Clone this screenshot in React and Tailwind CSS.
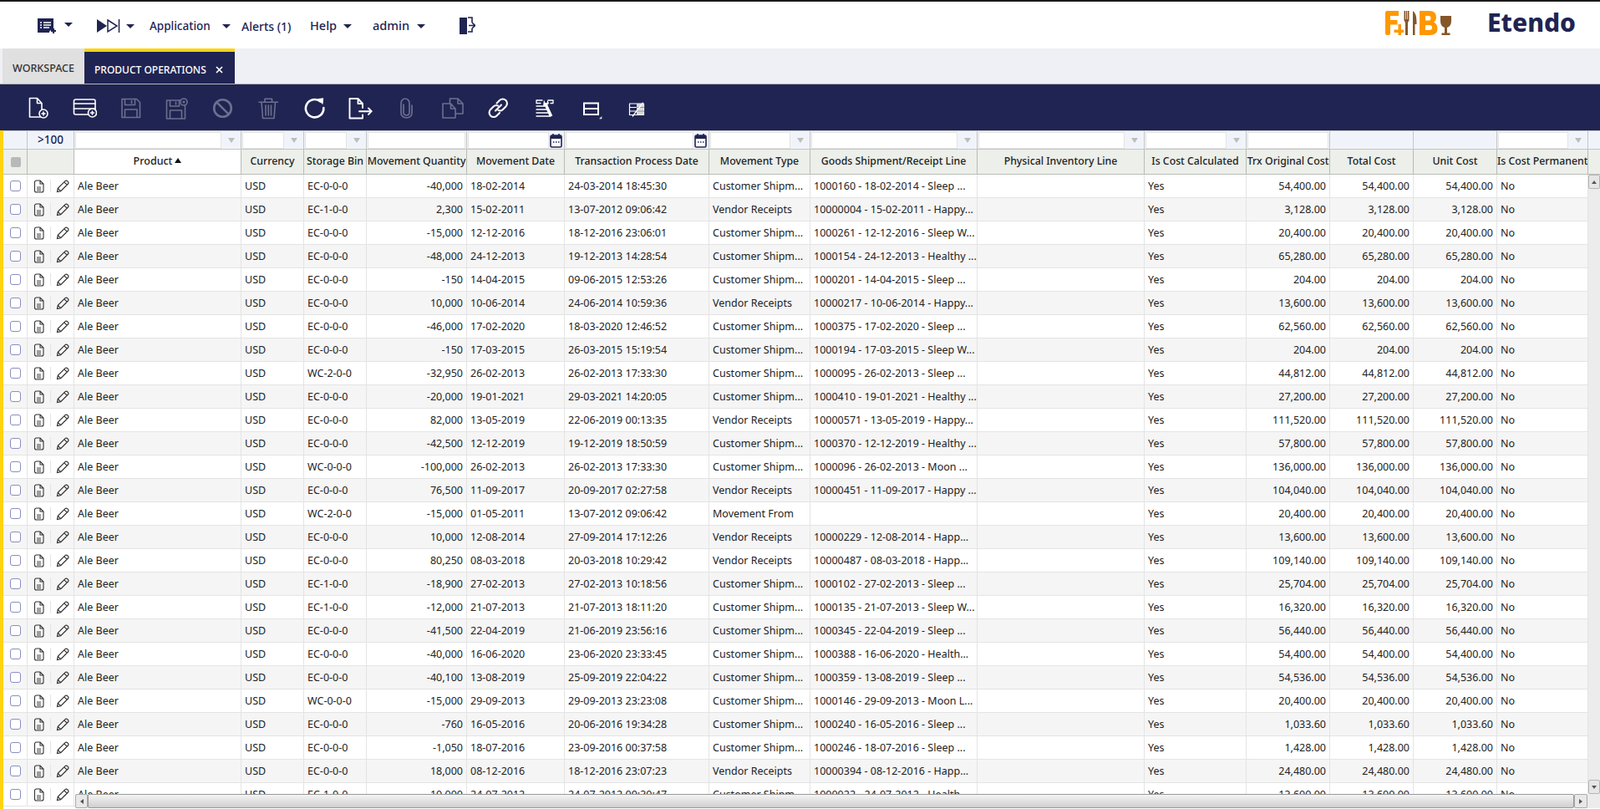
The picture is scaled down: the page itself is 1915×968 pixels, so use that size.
const CS = "Customer Shipm...";
const VR = "Vendor Receipts";

const rows = [
  ["EC-0-0-0", "-40,000", "18-02-2014", "24-03-2014 18:45:30", CS, "1000160 - 18-02-2014 - Sleep ...", "54,400.00"],
  ["EC-1-0-0", "2,300", "15-02-2011", "13-07-2012 09:06:42", VR, "10000004 - 15-02-2011 - Happy...", "3,128.00"],
  ["EC-0-0-0", "-15,000", "12-12-2016", "18-12-2016 23:06:01", CS, "1000261 - 12-12-2016 - Sleep W...", "20,400.00"],
  ["EC-0-0-0", "-48,000", "24-12-2013", "19-12-2013 14:28:54", CS, "1000154 - 24-12-2013 - Healthy ...", "65,280.00"],
  ["EC-0-0-0", "-150", "14-04-2015", "09-06-2015 12:53:26", CS, "1000201 - 14-04-2015 - Sleep ...", "204.00"],
  ["EC-0-0-0", "10,000", "10-06-2014", "24-06-2014 10:59:36", VR, "10000217 - 10-06-2014 - Happy...", "13,600.00"],
  ["EC-0-0-0", "-46,000", "17-02-2020", "18-03-2020 12:46:52", CS, "1000375 - 17-02-2020 - Sleep ...", "62,560.00"],
  ["EC-0-0-0", "-150", "17-03-2015", "26-03-2015 15:19:54", CS, "1000194 - 17-03-2015 - Sleep W...", "204.00"],
  ["WC-2-0-0", "-32,950", "26-02-2013", "26-02-2013 17:33:30", CS, "1000095 - 26-02-2013 - Sleep ...", "44,812.00"],
  ["EC-0-0-0", "-20,000", "19-01-2021", "29-03-2021 14:20:05", CS, "1000410 - 19-01-2021 - Healthy ...", "27,200.00"],
  ["EC-0-0-0", "82,000", "13-05-2019", "22-06-2019 00:13:35", VR, "10000571 - 13-05-2019 - Happy...", "111,520.00"],
  ["EC-0-0-0", "-42,500", "12-12-2019", "19-12-2019 18:50:59", CS, "1000370 - 12-12-2019 - Healthy ...", "57,800.00"],
  ["WC-0-0-0", "-100,000", "26-02-2013", "26-02-2013 17:33:30", CS, "1000096 - 26-02-2013 - Moon ...", "136,000.00"],
  ["EC-0-0-0", "76,500", "11-09-2017", "20-09-2017 02:27:58", VR, "10000451 - 11-09-2017 - Happy ...", "104,040.00"],
  ["WC-2-0-0", "-15,000", "01-05-2011", "13-07-2012 09:06:42", "Movement From", "", "20,400.00"],
  ["EC-0-0-0", "10,000", "12-08-2014", "27-09-2014 17:12:26", VR, "10000229 - 12-08-2014 - Happ...", "13,600.00"],
  ["EC-0-0-0", "80,250", "08-03-2018", "20-03-2018 10:29:42", VR, "10000487 - 08-03-2018 - Happ...", "109,140.00"],
  ["EC-1-0-0", "-18,900", "27-02-2013", "27-02-2013 10:18:56", CS, "1000102 - 27-02-2013 - Sleep ...", "25,704.00"],
  ["EC-1-0-0", "-12,000", "21-07-2013", "21-07-2013 18:11:20", CS, "1000135 - 21-07-2013 - Sleep W...", "16,320.00"],
  ["EC-0-0-0", "-41,500", "22-04-2019", "21-06-2019 23:56:16", CS, "1000345 - 22-04-2019 - Sleep ...", "56,440.00"],
  ["EC-0-0-0", "-40,000", "16-06-2020", "23-06-2020 23:33:45", CS, "1000388 - 16-06-2020 - Health...", "54,400.00"],
  ["EC-0-0-0", "-40,100", "13-08-2019", "25-09-2019 22:04:22", CS, "1000359 - 13-08-2019 - Sleep ...", "54,536.00"],
  ["WC-0-0-0", "-15,000", "29-09-2013", "29-09-2013 23:23:08", CS, "1000146 - 29-09-2013 - Moon L...", "20,400.00"],
  ["EC-0-0-0", "-760", "16-05-2016", "20-06-2016 19:34:28", CS, "1000240 - 16-05-2016 - Sleep ...", "1,033.60"],
  ["EC-0-0-0", "-1,050", "18-07-2016", "23-09-2016 00:37:58", CS, "1000246 - 18-07-2016 - Sleep ...", "1,428.00"],
  ["EC-0-0-0", "18,000", "08-12-2016", "18-12-2016 23:07:23", VR, "10000394 - 08-12-2016 - Happ...", "24,480.00"],
  ["EC-1-0-0", "-10,000", "24-07-2012", "24-07-2012 09:30:47", CS, "1000022 - 24-07-2012 - Health...", "13,600.00"],
];

const headers = [
  "Currency",
  "Storage Bin",
  "Movement Quantity",
  "Movement Date",
  "Transaction Process Date",
  "Movement Type",
  "Goods Shipment/Receipt Line",
  "Physical Inventory Line",
  "Is Cost Calculated",
  "Trx Original Cost",
  "Total Cost",
  "Unit Cost",
  "Is Cost Permanent",
];

// filter row: kind of control in each column after Product
const filters = ["combo", "combo", "text", "date", "date", "combo", "combo", "combo", "combo", "text", "none", "none", "combo"];

function Caret({ className = "" }) {
  return <span className={`inline-block w-0 h-0 border-x-[5px] border-x-transparent border-t-[5px] border-t-[#202452] ${className}`} />;
}

function Svg({ children, dim }) {
  return (
    <svg
      width="30"
      height="30"
      viewBox="0 0 30 30"
      fill="none"
      stroke={dim ? "#6c6f8e" : "#ffffff"}
      strokeWidth="1.6"
      strokeLinejoin="round"
      strokeLinecap="round"
    >
      {children}
    </svg>
  );
}

const PlusBadge = ({ cx, cy }) => (
  <>
    <circle cx={cx} cy={cy} r="5" fill="#202452" />
    <path d={`M${cx - 2} ${cy}h4M${cx} ${cy - 2}v4`} strokeWidth="1.6" />
  </>
);

const toolbar = [
  <Svg key="new"><path d="M4.500 3.500h9l5.500 6v16.500h-14.500zM13.500 3.500v6h5.500" /><PlusBadge cx="21" cy="22" /></Svg>,
  <Svg key="newrow"><rect x="2.500" y="5" width="25.500" height="18" rx="2" /><path d="M2.500 10h25.500M2.500 16h25.500" /><PlusBadge cx="24.500" cy="21" /></Svg>,
  <Svg key="save" dim><path d="M5 4.500h17.500l4 4v18h-21.500zM8.500 4.500v7h12v-7M16.500 6.500v3M8.500 26.500v-9.500h14.500v9.500" /></Svg>,
  <Svg key="saveclose" dim><path d="M3.500 6h18l4 4v18h-22zM7.500 6v7h11v-7M14.500 8v3M7.500 28v-10h14v10" /><circle cx="24" cy="8" r="4" fill="#202452" /><circle cx="24" cy="8" r="0.7" /></Svg>,
  <Svg key="undo" dim><g strokeWidth="2.600"><circle cx="15.500" cy="15.500" r="10.300" /><path d="M8.300 8.300l14.400 14.400" /></g></Svg>,
  <Svg key="delete" dim><path d="M4 8.200h22.500M11 8.200v-4h8.500v4M7 8.200l1.500 19.300h13.500l1.500-19.300M12 12v12M15.300 12v12M18.500 12v12" /></Svg>,
  <Svg key="refresh"><path d="M22.500 7.500a10.700 10.700 0 1 0 3.800 7.500" strokeWidth="2.600" /><path d="M20 4.500l5.700-.7-.7 6.200z" fill="#fff" strokeWidth="1" /></Svg>,
  <Svg key="export"><path d="M18 15v-5l-5.500-6h-10v23.500h15.500v-4M12.500 4v6h5.500M14 19.200h14.500M25 15.500l3.700 3.700-3.700 3.700" strokeWidth="1.900" /></Svg>,
  <Svg key="attach" dim><path d="M22 12v9.500a6.500 5.500 0 0 1-13 0v-12a5 5.500 0 0 1 10 0v11.500a3.500 3 0 0 1-7 0v-10" strokeWidth="1.700" /></Svg>,
  <Svg key="copy" dim><path d="M12.500 9v-5h9.500l6 6v12h-9M22 4v6h6M4 10h9.500l5.500 6v11h-15zM13.500 10v6h5.500" /></Svg>,
  <Svg key="link"><g strokeWidth="2.100"><path d="M12 18.500l7-7M13.500 9.500l3.500-3.500a5.200 5.200 0 0 1 7.400 7.400l-3.500 3.500a5.200 5.200 0 0 1-5.400 1.200M17 21l-3.500 3.500a5.200 5.200 0 0 1-7.400-7.400l3.500-3.500a5.200 5.200 0 0 1 5.400-1.200" /></g></Svg>,
  <Svg key="tools"><path d="M6 6h7M6 6v3.500h5M6 13h10M6 17h12M6 21h14M6 25h16M20 6h6v3.500h-3" strokeWidth="1.300" /><path d="M15 5.500l1.500 3.500 2 .2.800-3.700 1.700 4.200-1.700 1.800 6 13-3.200 1.500-6-13-2-.5z" fill="#fff" stroke="none" /></Svg>,
  <Svg key="layout"><rect x="8" y="9.500" width="17" height="13.500" strokeWidth="2" strokeLinejoin="miter" /><path d="M8 16h17" strokeWidth="2" /><path d="M29 26v2h-2z" fill="#fff" strokeWidth="0.600" /></Svg>,
  <Svg key="audit"><path d="M7.500 10h17v13.500h-17zM7.500 14.500h17M7.500 19h17" strokeWidth="1.200" /><path d="M16 10h8.500v13.500h-8.500z" fill="#d9d9d9" stroke="none" /><path d="M16 14.500h8.500M16 19h8.500" stroke="#8f90a0" strokeWidth="1" /><path d="M11.300 25l12-15.800" strokeWidth="1.400" /></Svg>,
];

function FnbLogo() {
  return (
    <svg width="79" height="29" viewBox="0 0 79 29">
      <path d="M0 2a2 2 0 0 1 2-2h14v6H6v5h8.500v5.500H6V27a2 2 0 0 1-2 2H2a2 2 0 0 1-2-2z" fill="#ff9800" />
      <path d="M15.500 16h3.500v6.500h3V26h-3v3h-3.500v-3H10.500v-3.500h5z" fill="#ff9800" />
      <path d="M22.500 0H24v10h.700V0h1.600v10h.700V0h1.500v11.500l-1.500 2.500v15h-3V14l-1.500-2.500z" fill="#85562a" />
      <path d="M33 29V0q4.500 3 4.500 13v3H35.500v13z" fill="#85562a" />
      <path d="M41 0h12q8 0 8 7.500 0 4-3 6 4.500 2 4.500 7.500 0 8-9 8H41zm7 6v5.500h4q2.500 0 2.500-2.800T52 6zm0 11v6h5q3 0 3-3t-3-3z" fill="#ff9800" fillRule="evenodd" />
      <path d="M66 6h13v6q0 6.500-5 8v6.500h3.500V29H67.500v-2.500H71V20q-5-1.500-5-8z" fill="#85562a" />
    </svg>
  );
}

function HeaderBar() {
  return (
    <div className="flex items-center h-[56px] pt-[2px] bg-white text-[#202452]">
      <div className="flex items-center ml-[45px] w-[71px]">
        <svg width="24" height="20" viewBox="0 0 24 20">
          <path d="M0 1h19v14h-2a3 3 0 0 0-3 3H0z" fill="#202452" />
          <path d="M3 6h2M7 6h9M3 9h2M7 9h9M3 12h2M7 12h7" stroke="#fff" strokeWidth="1.300" />
          <path d="M19 13v6M16 16h6" stroke="#202452" strokeWidth="2.200" />
        </svg>
        <Caret className="ml-[8px] mb-1" />
      </div>
      <div className="flex items-center w-[63px]">
        <svg width="28" height="20" viewBox="0 0 28 20">
          <path d="M0 2l12 8-12 8z" fill="#202452" />
          <path d="M13 3l11 7-11 7z" fill="none" stroke="#202452" strokeWidth="1.500" />
          <path d="M26.500 2v16" stroke="#202452" strokeWidth="1.500" />
        </svg>
        <Caret className="ml-[7px]" />
      </div>
      <span className="text-[13.500px] font-medium w-[87px]">Application</span>
      <Caret className="mr-[13px]" />
      <span className="text-[14px] font-medium w-[82px]">Alerts (1)</span>
      <span className="text-[14.500px] font-medium w-[40px]">Help</span>
      <Caret />
      <span className="text-[14.500px] font-medium ml-[25px] w-[55px]">admin</span>
      <Caret className="ml-[-2px]" />
      <svg className="ml-[40px]" width="20" height="24" viewBox="0 0 20 24">
        <path d="M1 2l9 0v20H1z" fill="#202452" />
        <path d="M11 2h5v6M16 15v4h-5M12 11.500h7M16 8l3.500 3.500-3.500 3.500" fill="none" stroke="#202452" strokeWidth="1.600" />
      </svg>
      <div className="flex items-center ml-auto mr-[29px] mb-[8px]">
        <FnbLogo />
        <span className="ml-[43px] text-[30px] leading-none font-extrabold">Etendo</span>
      </div>
    </div>
  );
}

function TabBar() {
  return (
    <div className="flex h-[43px] bg-[#eff0f5] border-b border-[#b5b5b5] pl-[3px]">
      <div className="flex items-center justify-center w-[98px] pt-[7px] bg-[#e0e0e0] text-[#333] text-[12.500px] font-medium">WORKSPACE</div>
      <div className="flex items-center w-[180px] pt-[5px] bg-[#202452] border-t-4 border-[#ffd310] text-white text-[12px] font-medium pl-[12px] whitespace-nowrap">
        PRODUCT OPERATIONS
        <svg className="ml-[11px]" width="9" height="9" viewBox="0 0 9 9" stroke="#fff" strokeWidth="1.700"><path d="M1 1l7 7M8 1l-7 7" /></svg>
      </div>
    </div>
  );
}

function Toolbar() {
  return (
    <div className="flex items-center h-[55px] bg-[#202452] pl-[31px] gap-[25px]">
      {toolbar}
    </div>
  );
}

const filterTd = "border-t border-r border-b border-[#c4c4c4] bg-[#f0f4fa] p-0";

function FilterCell({ kind }) {
  if (kind === "none") return <td className={filterTd} />;
  return (
    <td className={filterTd}>
      <div className="flex items-center h-[21px]">
        <div className="flex-1 h-[20px] ml-[1px] mr-[1px] bg-white border border-[#e3e3e3]" />
        {kind === "combo" && (
          <span className="flex justify-center w-[22px]">
            <span className="w-0 h-0 border-x-[4.500px] border-x-transparent border-t-[6px] border-t-[#bdbdbd]" />
          </span>
        )}
        {kind === "date" && (
          <svg className="mr-[2px]" width="15" height="18" viewBox="0 0 15 18">
            <rect x="1" y="3" width="13" height="14" rx="1.500" fill="#fff" stroke="#202452" strokeWidth="1.600" />
            <rect x="1" y="3" width="13" height="4" fill="#202452" />
            <path d="M4 1v3M11 1v3" stroke="#202452" strokeWidth="1.600" />
            <path d="M4 11h1.500M7 11h1.500M10 11h1.500" stroke="#202452" strokeWidth="1.500" />
          </svg>
        )}
      </div>
    </td>
  );
}

function Checkbox({ muted }) {
  return muted ? (
    <span className="block w-[12px] h-[12px] rounded-[2px] bg-[#b9b9b9]" />
  ) : (
    <span className="block w-[13px] h-[13px] rounded-[3px] border border-[#8a8ec4] bg-white" />
  );
}

function RowIcons() {
  return (
    <div className="flex items-center pl-[7px]">
      <svg width="13" height="16" viewBox="0 0 13 16" fill="none" stroke="#333" strokeWidth="1.100">
        <path d="M1.500 3a2 2 0 0 1 2-2H8l4 4v8a2 2 0 0 1-2 2H3.500a2 2 0 0 1-2-2zM8 1v4h4" />
        <path d="M4 9h5M4 11h5M4 13h5" strokeWidth="0.900" />
      </svg>
      <span className="w-px h-[15px] ml-[7px] bg-[#e4e4e4]" />
      <svg className="ml-[6px]" width="16" height="16" viewBox="0 0 16 16" fill="none" stroke="#333" strokeWidth="1.200">
        <path d="M1.500 14.500l.8-4.200L11 1.600a1.800 1.800 0 0 1 2.600 0l.8.800a1.800 1.800 0 0 1 0 2.600l-8.700 8.700zM2.300 10.300l3.400 3.400M9.800 2.800l3.400 3.400" />
      </svg>
    </div>
  );
}

function Row({ row, index }) {
  const [bin, qty, date, txDate, type, line, cost] = row;
  const cell = "border-r border-b border-[#e4e4e4] px-[4px] pt-[2px] whitespace-nowrap overflow-hidden";
  return (
    <tr className={`h-[28px] ${index % 2 ? "bg-[#f5f5f5]" : "bg-white"}`}>
      <td className="border-r border-b border-[#e4e4e4]"><div className="flex justify-center pl-[1px]"><Checkbox /></div></td>
      <td className="border-r border-b border-[#e4e4e4]"><RowIcons /></td>
      <td className={cell}>Ale Beer</td>
      <td className={cell}>USD</td>
      <td className={cell}>{bin}</td>
      <td className={`${cell} text-right`}>{qty}</td>
      <td className={cell}>{date}</td>
      <td className={cell}>{txDate}</td>
      <td className={cell}>{type}</td>
      <td className={cell}>{line}</td>
      <td className={cell}></td>
      <td className={cell}>Yes</td>
      <td className={`${cell} text-right`}>{cost}</td>
      <td className={`${cell} text-right`}>{cost}</td>
      <td className={`${cell} text-right`}>{cost}</td>
      <td className={cell}>No</td>
    </tr>
  );
}

function Grid() {
  return (
    <div className="relative flex-1 overflow-hidden border-l-4 border-[#ffd310] bg-white">
      <table className="table-fixed border-separate border-spacing-0 w-[1911px] text-[12.500px] text-[#222]">
        <colgroup>
          <col className="w-[29px]" />
          <col className="w-[56px]" />
          <col className="w-[200px]" />
          <col className="w-[75px]" />
          <col className="w-[75px]" />
          <col className="w-[120px]" />
          <col className="w-[117px]" />
          <col className="w-[173px]" />
          <col className="w-[121px]" />
          <col className="w-[200px]" />
          <col className="w-[200px]" />
          <col className="w-[122px]" />
          <col className="w-[100px]" />
          <col className="w-[100px]" />
          <col className="w-[100px]" />
          <col className="w-[109px]" />
          <col className="w-[14px]" />
        </colgroup>
        <thead>
          <tr className="h-[23px]">
            <td className={filterTd} />
            <td className={`${filterTd} text-center text-[#202452] text-[13.500px] font-medium`}>&gt;100</td>
            <FilterCell kind="combo" />
            {filters.map((f, i) => <FilterCell key={i} kind={f} />)}
            <td className="border-t border-b border-[#c4c4c4] bg-[#f0f4fa]" />
          </tr>
          <tr className="h-[30px]">
            <th className="border-r border-b border-[#b9bdb6] bg-[#ecefea]"><div className="flex justify-center pl-[1px]"><Checkbox muted /></div></th>
            <th className="border-r border-b border-[#b9bdb6] bg-[#ecefea]" />
            <th className="border-r border-b border-[#b9bdb6] bg-white font-medium">
              <span className="inline-flex items-center">
                Product
                <span className="ml-[3px] mb-[3px] w-0 h-0 border-x-[4px] border-x-transparent border-b-[6px] border-b-[#111]" />
              </span>
            </th>
            {headers.map((h) => (
              <th key={h} className="border-r border-b border-[#b9bdb6] bg-[#ecefea] text-[12.300px] font-medium whitespace-nowrap overflow-hidden">{h}</th>
            ))}
            <th className="border-b border-[#b9bdb6] bg-[#ecefea]" />
          </tr>
        </thead>
        <tbody>
          {rows.map((r, i) => <Row key={i} row={r} index={i} />)}
        </tbody>
      </table>

      {/* vertical scrollbar */}
      <div className="absolute right-0 top-[53px] bottom-[18px] w-[14px] flex flex-col bg-[#ececec]">
        <div className="flex justify-center items-center h-[17px] bg-[#e6e6e6] border border-[#b5b5b5] rounded-[2px]">
          <span className="w-0 h-0 border-x-[3px] border-x-transparent border-b-[4px] border-b-[#555]" />
        </div>
        <div className="flex-1" />
        <div className="flex justify-center items-center h-[17px] bg-[#e6e6e6] border border-[#b5b5b5] rounded-[2px]">
          <span className="w-0 h-0 border-x-[3px] border-x-transparent border-t-[4px] border-t-[#555]" />
        </div>
      </div>

      {/* horizontal scrollbar */}
      <div className="absolute left-[86px] right-0 bottom-[1px] h-[17px] flex bg-[#ececec]">
        <div className="flex justify-center items-center w-[15px] border border-[#aaa] bg-[#e8e8e8] rounded-[2px]">
          <span className="w-0 h-0 border-y-[3px] border-y-transparent border-r-[4px] border-r-[#555]" />
        </div>
        <div className="flex-1 bg-gradient-to-b from-[#f4f4f4] to-[#cfcfcf] border border-[#999] rounded-[2px]" />
        <div className="flex justify-center items-center w-[16px] border border-[#aaa] bg-[#e8e8e8] rounded-[2px] mr-[15px]">
          <span className="w-0 h-0 border-y-[3px] border-y-transparent border-l-[4px] border-l-[#555]" />
        </div>
      </div>
    </div>
  );
}

export default function App() {
  return (
    <div className="flex flex-col h-[968px] w-[1915px] overflow-hidden bg-white border-t-2 border-[#1a1a1a] font-['Inter','Liberation_Sans',sans-serif]">
      <HeaderBar />
      <TabBar />
      <Toolbar />
      <Grid />
    </div>
  );
}
